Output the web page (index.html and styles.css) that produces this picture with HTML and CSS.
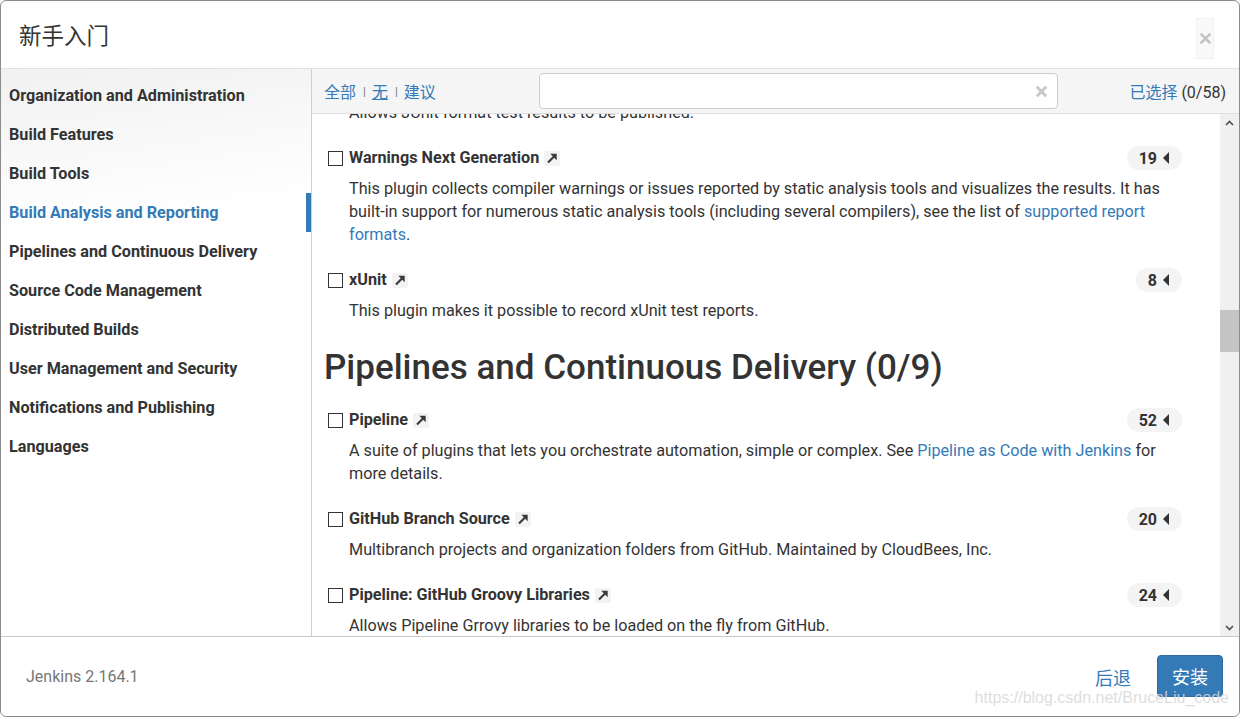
FILE: index.html
```html
<!DOCTYPE html>
<html lang="zh">
<head>
<meta charset="utf-8">
<title>新手入门</title>
<link rel="stylesheet" href="styles.css">
</head>
<body>
<div class="modal">
  <header class="modal-header">
    <h1 class="modal-title">新手入门</h1>
    <button class="close" type="button" aria-label="Close">
      <svg width="11" height="11" viewBox="0 0 11 11"><path d="M1.5 1.5L9.5 9.5M9.5 1.5L1.5 9.5" stroke="#c4c4c4" stroke-width="2.6" stroke-linecap="square"/></svg>
    </button>
  </header>

  <div class="modal-body">
    <nav class="categories">
      <ul>
        <li>Organization and Administration</li>
        <li>Build Features</li>
        <li>Build Tools</li>
        <li class="active">Build Analysis and Reporting</li>
        <li>Pipelines and Continuous Delivery</li>
        <li>Source Code Management</li>
        <li>Distributed Builds</li>
        <li>User Management and Security</li>
        <li>Notifications and Publishing</li>
        <li>Languages</li>
      </ul>
    </nav>

    <section class="plugins">
      <div class="toolbar">
        <div class="select-links">
          <a class="link">全部</a><span class="sep">|</span><a class="link current">无</a><span class="sep">|</span><a class="link">建议</a>
        </div>
        <div class="search">
          <input class="search-input" type="text">
          <span class="clear">
            <svg width="13" height="13" viewBox="0 0 13 13"><path d="M1.8 1.8L11.2 11.2M11.2 1.8L1.8 11.2" stroke="#c8c8c8" stroke-width="3"/></svg>
          </span>
        </div>
        <div class="selected"><a class="link">已选择</a> (0/58)</div>
      </div>

      <div class="viewport">
        <div class="list">
          <div class="plugin plugin-tail">
            <p class="desc">Allows JUnit format test results to be published.</p>
          </div>

          <div class="plugin">
            <div class="title-row">
              <span class="cb"></span><span class="name">Warnings Next Generation</span>
              <span class="ext"><svg width="16" height="15" viewBox="0 0 16 15"><path d="M4 11.5L10.5 5" stroke="#3a3a3a" stroke-width="2.2"/><path d="M6.3 2.8H12.7V9.2Z" fill="#3a3a3a"/></svg></span>
              <span class="deps">19<i class="tri"></i></span>
            </div>
            <p class="desc">This plugin collects compiler warnings or issues reported by static analysis tools and visualizes the results. It has built-in support for numerous static analysis tools (including several compilers), see the list of <a class="link">supported report formats</a>.</p>
          </div>

          <div class="plugin">
            <div class="title-row">
              <span class="cb"></span><span class="name">xUnit</span>
              <span class="ext"><svg width="16" height="15" viewBox="0 0 16 15"><path d="M4 11.5L10.5 5" stroke="#3a3a3a" stroke-width="2.2"/><path d="M6.3 2.8H12.7V9.2Z" fill="#3a3a3a"/></svg></span>
              <span class="deps">8<i class="tri"></i></span>
            </div>
            <p class="desc">This plugin makes it possible to record xUnit test reports.</p>
          </div>

          <h2 class="cat-heading">Pipelines and Continuous Delivery (0/9)</h2>

          <div class="plugin">
            <div class="title-row">
              <span class="cb"></span><span class="name">Pipeline</span>
              <span class="ext"><svg width="16" height="15" viewBox="0 0 16 15"><path d="M4 11.5L10.5 5" stroke="#3a3a3a" stroke-width="2.2"/><path d="M6.3 2.8H12.7V9.2Z" fill="#3a3a3a"/></svg></span>
              <span class="deps">52<i class="tri"></i></span>
            </div>
            <p class="desc">A suite of plugins that lets you orchestrate automation, simple or complex. See <a class="link">Pipeline as Code with Jenkins</a> for more details.</p>
          </div>

          <div class="plugin">
            <div class="title-row">
              <span class="cb"></span><span class="name">GitHub Branch Source</span>
              <span class="ext"><svg width="16" height="15" viewBox="0 0 16 15"><path d="M4 11.5L10.5 5" stroke="#3a3a3a" stroke-width="2.2"/><path d="M6.3 2.8H12.7V9.2Z" fill="#3a3a3a"/></svg></span>
              <span class="deps">20<i class="tri"></i></span>
            </div>
            <p class="desc">Multibranch projects and organization folders from GitHub. Maintained by CloudBees, Inc.</p>
          </div>

          <div class="plugin">
            <div class="title-row">
              <span class="cb"></span><span class="name">Pipeline: GitHub Groovy Libraries</span>
              <span class="ext"><svg width="16" height="15" viewBox="0 0 16 15"><path d="M4 11.5L10.5 5" stroke="#3a3a3a" stroke-width="2.2"/><path d="M6.3 2.8H12.7V9.2Z" fill="#3a3a3a"/></svg></span>
              <span class="deps">24<i class="tri"></i></span>
            </div>
            <p class="desc">Allows Pipeline Grrovy libraries to be loaded on the fly from GitHub.</p>
          </div>
        </div>

        <div class="scrollbar">
          <span class="sb-btn"><svg width="9" height="6" viewBox="0 0 9 6"><path d="M1 5L4.5 1.5L8 5" fill="none" stroke="#505050" stroke-width="1.7"/></svg></span>
          <span class="sb-track"><span class="sb-thumb"></span></span>
          <span class="sb-btn"><svg width="9" height="6" viewBox="0 0 9 6"><path d="M1 1L4.5 4.5L8 1" fill="none" stroke="#505050" stroke-width="1.7"/></svg></span>
        </div>
      </div>
    </section>
  </div>

  <footer class="modal-footer">
    <span class="version">Jenkins 2.164.1</span>
    <div class="actions">
      <a class="link back">后退</a>
      <button class="install" type="button">安装</button>
    </div>
  </footer>

  <div class="watermark">https://blog.csdn.net/BruceLiu_code</div>
</div>
</body>
</html>
```

FILE: styles.css
```css
* { box-sizing: border-box; }

html, body {
  margin: 0;
  padding: 0;
  background: #fff;
}

body {
  font-family: Roboto, "Noto Sans CJK SC", "Liberation Sans", sans-serif;
  color: #333;
  font-size: 16.2px;
}

.modal {
  position: relative;
  width: 1240px;
  height: 717px;
  border: 1px solid #8c8c8c;
  border-radius: 6px;
  overflow: hidden;
  display: flex;
  flex-direction: column;
  background: #fff;
}

.link {
  color: #337ab7;
  text-decoration: none;
  cursor: pointer;
}

/* header */
.modal-header {
  height: 68px;
  flex: none;
  display: flex;
  align-items: flex-start;
  justify-content: space-between;
  border-bottom: 1px solid #e2e2e2;
  padding: 0 25px 0 18px;
}

.modal-title {
  margin: 0;
  font-size: 22.5px;
  font-weight: 400;
  line-height: 30px;
  padding-top: 18px;
  color: #333;
  font-family: "Noto Sans CJK SC", Roboto, sans-serif;
}

.close {
  margin-top: 17px;
  width: 18px;
  height: 41px;
  padding: 0;
  border: 1px solid #f0f0f0;
  background: #f9f9f9;
  display: flex;
  align-items: center;
  justify-content: center;
}

/* body */
.modal-body {
  flex: 1;
  display: flex;
  min-height: 0;
}

.categories {
  width: 311px;
  flex: none;
  border-right: 1px solid #cfcfcf;
  background: linear-gradient(172deg, #f1f1f1 0px, #ffffff 170px);
}

.categories ul {
  list-style: none;
  margin: 0;
  padding: 7px 0 0;
}

.categories li {
  height: 39px;
  line-height: 39px;
  padding-left: 8px;
  font-weight: 700;
  font-size: 16.2px;
  color: #333;
  white-space: nowrap;
}

.categories li.active {
  color: #337ab7;
  box-shadow: inset -5px 0 0 #337ab7;
}

.plugins {
  flex: 1;
  display: flex;
  flex-direction: column;
  min-width: 0;
}

.toolbar {
  height: 45px;
  flex: none;
  background: #f5f5f5;
  border-bottom: 1px solid #dedede;
  display: grid;
  grid-template-columns: 215px 519px 1fr;
  align-items: center;
  padding: 0 13px 0 12px;
}

.select-links {
  font-size: 16px;
  font-family: "Noto Sans CJK SC", Roboto, sans-serif;
  display: flex;
  align-items: center;
  white-space: nowrap;
}

.select-links .current {
  text-decoration: underline;
}

.sep {
  color: #7a7a7a;
  font-size: 11px;
  margin: 0 6px 0 7px;
  font-family: "Liberation Sans", sans-serif;
}

.search {
  position: relative;
  height: 36px;
  margin-top: -1px;
}

.search-input {
  width: 100%;
  height: 36px;
  border: 1px solid #cccccc;
  border-radius: 4px;
  background: #fff;
  outline: none;
  padding: 0 30px 0 10px;
}

.clear {
  position: absolute;
  right: 10px;
  top: 12px;
  display: flex;
}

.selected {
  text-align: right;
  font-size: 16px;
  white-space: nowrap;
  color: #333;
}

.selected .link {
  font-family: "Noto Sans CJK SC", Roboto, sans-serif;
}

/* list */
.viewport {
  flex: 1;
  min-height: 0;
  display: flex;
  overflow: hidden;
}

.list {
  flex: 1;
  min-width: 0;
  overflow: hidden;
  padding: 0 38px 0 12px;
}

.plugin {
  padding-bottom: 23px;
}

.plugin-tail {
  margin-top: -13px;
}

.title-row {
  height: 22px;
  display: flex;
  align-items: center;
}

.cb {
  width: 15px;
  height: 15px;
  margin-left: 4px;
  margin-right: 6px;
  border: 1.5px solid #333;
  background: #fff;
  flex: none;
}

.name {
  font-weight: 700;
  font-size: 16.2px;
  line-height: 22px;
  color: #333;
  white-space: nowrap;
}

.ext {
  margin-left: 5px;
  width: 16px;
  height: 15px;
  background: #f3f3f3;
  border-radius: 2px;
  display: flex;
}

.deps {
  margin-left: auto;
  height: 24px;
  border-radius: 12px;
  background: #f4f4f4;
  display: flex;
  align-items: center;
  padding: 0 13px 0 12px;
  font-weight: 700;
  font-size: 16px;
  color: #333;
}

.tri {
  width: 0;
  height: 0;
  margin-left: 6px;
  border-top: 6px solid transparent;
  border-bottom: 6px solid transparent;
  border-right: 6px solid #333;
}

.desc {
  margin: 8px 0 0;
  padding-left: 25px;
  font-size: 16.2px;
  line-height: 23px;
  color: #333;
}

.plugin-tail .desc {
  margin-top: 0;
}

.cat-heading {
  margin: 0 0 18px;
  font-size: 35px;
  font-weight: 500;
  line-height: 46px;
  color: #333;
  white-space: nowrap;
}

/* fake scrollbar */
.scrollbar {
  width: 19px;
  flex: none;
  background: #f0f0f0;
  display: flex;
  flex-direction: column;
}

.sb-btn {
  height: 17px;
  flex: none;
  display: flex;
  align-items: center;
  justify-content: center;
}

.sb-track {
  flex: 1;
  display: flex;
  flex-direction: column;
}

.sb-thumb {
  margin-top: 179px;
  height: 42px;
  background: #c4c4c4;
}

/* footer */
.modal-footer {
  height: 80px;
  flex: none;
  border-top: 1px solid #c9c9c9;
  display: flex;
  align-items: center;
  justify-content: space-between;
  padding: 0 16px 0 25px;
}

.version {
  font-size: 16px;
  color: #777;
}

.actions {
  display: flex;
  align-items: center;
}

.back {
  font-size: 18px;
  font-family: "Noto Sans CJK SC", sans-serif;
  margin-right: 26px;
}

.install {
  height: 42px;
  padding: 0 14px;
  border: 1px solid #2e6da4;
  border-radius: 4px;
  background: #337ab7;
  color: #fff;
  font-size: 18px;
  font-family: "Noto Sans CJK SC", sans-serif;
  margin-top: -2px;
}

.watermark {
  position: absolute;
  right: 10px;
  bottom: 9px;
  font-family: "Liberation Sans", Arial, sans-serif;
  font-size: 16px;
  color: rgba(215, 215, 215, 0.85);
  pointer-events: none;
  white-space: nowrap;
}
```
